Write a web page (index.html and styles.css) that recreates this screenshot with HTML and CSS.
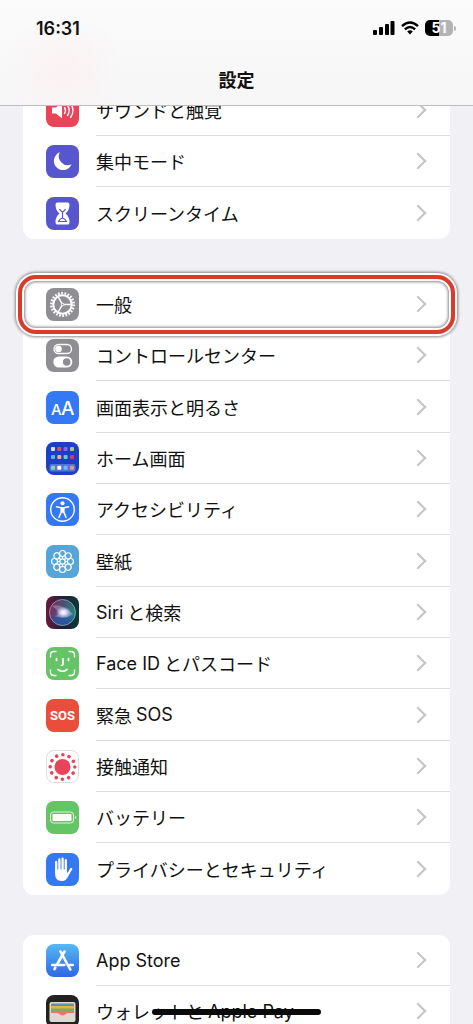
FILE: index.html
```html
<!DOCTYPE html>
<html lang="ja">
<head>
  <meta charset="UTF-8" />
  <meta name="viewport" content="width=device-width, initial-scale=1.0"/>
  <title>設定</title>
  <link rel="stylesheet" href="styles.css">
</head>
<body>
  <div class="screen">
    <header class="header">
      <div class="status-bar">
        <span class="time">16:31</span>
        <div class="status-icons">
          <svg width="22" height="14" viewBox="0 0 22 14">
            <rect x="0" y="9" width="4" height="5" rx="1"/>
            <rect x="6" y="6" width="4" height="8" rx="1"/>
            <rect x="12" y="3" width="4" height="11" rx="1"/>
            <rect x="17.500" y="0" width="4" height="14" rx="1"/>
          </svg>
          <svg width="18" height="14" viewBox="0 0 18 14">
            <g fill="none" stroke="#000" stroke-width="2.500">
              <path d="M1 5.200 Q9 -2.300 17 5.200"/>
              <path d="M3.900 8.300 Q9 3.600 14.100 8.300"/>
            </g>
            <path d="M6.200 10.500 Q9 8.200 11.800 10.500 L9 13.500 Z"/>
          </svg>
          <span class="battery">51</span>
        </div>
      </div>
      <h1>設定</h1>
    </header>

    <main class="settings">
      <nav class="group">
        <a class="row" href="#">
          <svg class="icon" viewBox="0 0 33 33">
            <rect width="33" height="33" rx="8" fill="#ea4459"/>
            <path d="M6 13.500 H10 L16 8.500 V24.500 L10 19.500 H6 Z" fill="#fff"/>
            <g fill="none" stroke="#fff" stroke-width="1.400" stroke-linecap="round">
              <path d="M18.500 13.500 Q20.500 16.500 18.500 19.500"/>
              <path d="M21.500 11.500 Q25 16.500 21.500 21.500"/>
              <path d="M24.500 9.500 Q29.500 16.500 24.500 23.500"/>
            </g>
          </svg>
          <span class="label">サウンドと触覚</span>
        </a>
        <a class="row" href="#">
          <svg class="icon" viewBox="0 0 33 33">
            <rect width="33" height="33" rx="8" fill="#5856ce"/>
            <path d="M13.800 7.300 A9.200 9.200 0 1 0 25.600 19.300 A8.900 8.900 0 0 1 13.800 7.300 Z" fill="#fff"/>
          </svg>
          <span class="label">集中モード</span>
        </a>
        <a class="row" href="#">
          <svg class="icon" viewBox="0 0 33 33">
            <rect width="33" height="33" rx="8" fill="#5856ce"/>
            <path d="M11 5.500 H22 Q23.500 5.500 23.500 8 Q23.500 13 19.500 16.500 Q23.500 20 23.500 25 Q23.500 27.500 22 27.500 H11 Q9.500 27.500 9.500 25 Q9.500 20 13.500 16.500 Q9.500 13 9.500 8 Q9.500 5.500 11 5.500 Z" fill="#fff"/>
            <path d="M13.500 12 Q14.500 14 16.500 15 Q18.500 14 19.500 12 M16.500 14.500 V21.500 M12.500 24.500 Q13.500 22 16.500 21 Q19.500 22 20.500 24.500 Z" fill="none" stroke="#5856ce" stroke-width="1.200"/>
          </svg>
          <span class="label">スクリーンタイム</span>
        </a>
      </nav>

      <nav class="group">
        <a class="row" href="#">
          <svg class="icon" viewBox="0 0 33 33">
            <rect width="33" height="33" rx="8" fill="#8e8e93"/>
            <g fill="none" stroke="#fff">
              <circle cx="16.500" cy="16.500" r="11.200" stroke-width="2.600" stroke-dasharray="1.700 1.498"/>
              <circle cx="16.500" cy="16.500" r="9.200" stroke-width="2"/>
              <path d="M16.500 16.500 H25.500 M16.500 16.500 L12 8.700 M16.500 16.500 L12 24.300" stroke-width="1.500"/>
              <circle cx="16.500" cy="16.500" r="1.300" fill="#8e8e93" stroke-width="1"/>
            </g>
          </svg>
          <span class="label">一般</span>
          <span class="highlight"></span>
        </a>
        <a class="row" href="#">
          <svg class="icon" viewBox="0 0 33 33">
            <rect width="33" height="33" rx="8" fill="#8e8e93"/>
            <rect x="8" y="5.500" width="17.500" height="9" rx="4.500" fill="none" stroke="#fff" stroke-width="1.300"/>
            <circle cx="12.500" cy="10" r="3.300" fill="#fff"/>
            <rect x="7.300" y="17.500" width="19" height="11" rx="5.500" fill="#fff"/>
            <circle cx="20.700" cy="23" r="3.800" fill="#8e8e93"/>
          </svg>
          <span class="label">コントロールセンター</span>
        </a>
        <a class="row" href="#">
          <svg class="icon" viewBox="0 0 33 33">
            <rect width="33" height="33" rx="8" fill="#3478f6"/>
            <text class="icon-text" x="5" y="24" font-size="15">A</text>
            <text class="icon-text" x="15" y="24" font-size="19">A</text>
          </svg>
          <span class="label">画面表示と明るさ</span>
        </a>
        <a class="row" href="#">
          <svg class="icon" viewBox="0 0 33 33">
            <rect width="33" height="33" rx="8" fill="#1d3fc4"/>
            <rect x="3.500" y="22" width="26" height="7.500" rx="2" fill="#5674d8"/>
            <g>
              <rect x="5" y="5" width="4" height="4" rx="1" fill="#d5e0fb"/>
              <rect x="11.300" y="5" width="4" height="4" rx="1" fill="#e4486b"/>
              <rect x="17.600" y="5" width="4" height="4" rx="1" fill="#9262ee"/>
              <rect x="24" y="5" width="4" height="4" rx="1" fill="#a5c978"/>
              <rect x="5" y="13" width="4" height="4" rx="1" fill="#58b4f3"/>
              <rect x="11.300" y="13" width="4" height="4" rx="1" fill="#eeb277"/>
              <rect x="17.600" y="13" width="4" height="4" rx="1" fill="#62d0c2"/>
              <rect x="24" y="13" width="4" height="4" rx="1" fill="#d83d57"/>
              <rect x="5" y="23.700" width="4" height="4" rx="1" fill="#84d49c"/>
              <rect x="11.300" y="23.700" width="4" height="4" rx="1" fill="#fff"/>
              <rect x="17.600" y="23.700" width="4" height="4" rx="1" fill="#69bdf6"/>
              <rect x="24" y="23.700" width="4" height="4" rx="1" fill="#e59b76"/>
            </g>
          </svg>
          <span class="label">ホーム画面</span>
        </a>
        <a class="row" href="#">
          <svg class="icon" viewBox="0 0 33 33">
            <rect width="33" height="33" rx="8" fill="#3478f6"/>
            <circle cx="16.500" cy="16.500" r="11.800" fill="none" stroke="#fff" stroke-width="1.400"/>
            <circle cx="16.500" cy="10.300" r="2" fill="#fff"/>
            <path d="M10.500 13.800 L15 14.800 H18 L22.500 13.800 M15.300 15 V19 L13 24.300 M17.700 15 V19 L20 24.300" fill="none" stroke="#fff" stroke-width="1.600" stroke-linecap="round" stroke-linejoin="round"/>
            <rect x="14.800" y="14.300" width="3.400" height="5.500" fill="#fff"/>
          </svg>
          <span class="label">アクセシビリティ</span>
        </a>
        <a class="row" href="#">
          <svg class="icon" viewBox="0 0 33 33">
            <rect width="33" height="33" rx="8" fill="#55a5d9"/>
            <g fill="none" stroke="#fff" stroke-width="1.200">
              <circle cx="16.500" cy="16.500" r="2.600"/>
              <g id="petals">
                <circle cx="16.500" cy="8.500" r="3"/>
                <circle cx="16.500" cy="24.500" r="3"/>
                <circle cx="8.500" cy="16.500" r="3"/>
                <circle cx="24.500" cy="16.500" r="3"/>
                <path d="M16.500 11.500 V14 M16.500 19 V21.500 M11.500 16.500 H14 M19 16.500 H21.500"/>
              </g>
              <use href="#petals" transform="rotate(45 16.500 16.500)"/>
            </g>
          </svg>
          <span class="label">壁紙</span>
        </a>
        <a class="row" href="#">
          <svg class="icon" viewBox="0 0 33 33">
            <defs>
              <linearGradient id="siri-bg" x1="0" y1="0" x2="1" y2="0">
                <stop offset="0" stop-color="#6a1a3e"/>
                <stop offset="0.500" stop-color="#1f1f3c"/>
                <stop offset="1" stop-color="#0c3a34"/>
              </linearGradient>
              <linearGradient id="siri-orb" x1="0" y1="0.200" x2="1" y2="0.600">
                <stop offset="0" stop-color="#8a2552"/>
                <stop offset="0.450" stop-color="#4a5078"/>
                <stop offset="1" stop-color="#1f8a7c"/>
              </linearGradient>
              <linearGradient id="siri-low" x1="0" y1="0" x2="0" y2="1">
                <stop offset="0.500" stop-color="#2b50b8" stop-opacity="0"/>
                <stop offset="1" stop-color="#2450a8"/>
              </linearGradient>
              <radialGradient id="siri-glow">
                <stop offset="0" stop-color="#fff"/>
                <stop offset="0.350" stop-color="#f4e4ff" stop-opacity="0.900"/>
                <stop offset="1" stop-color="#b8c6ff" stop-opacity="0"/>
              </radialGradient>
            </defs>
            <rect width="33" height="33" rx="8" fill="url(#siri-bg)"/>
            <circle cx="16.500" cy="16.500" r="13" fill="url(#siri-orb)"/>
            <circle cx="16.500" cy="16.500" r="13" fill="url(#siri-low)" stroke="#a3b8b8" stroke-opacity="0.700"/>
            <path d="M6 10 Q15 7 27 18 Q20 24 8 20 Q18 18 6 10 Z" fill="#d8c8ec" opacity="0.350"/>
            <ellipse cx="17.500" cy="16.500" rx="8" ry="6" fill="url(#siri-glow)"/>
          </svg>
          <span class="label">Siri<span>と検索</span></span>
        </a>
        <a class="row" href="#">
          <svg class="icon" viewBox="0 0 33 33">
            <rect width="33" height="33" rx="8" fill="#65c466"/>
            <g fill="none" stroke="#fff" stroke-linecap="round">
              <path d="M4.500 10 V8 Q4.500 4.500 8 4.500 H10 M23 4.500 H25 Q28.500 4.500 28.500 8 V10 M28.500 23 V25 Q28.500 28.500 25 28.500 H23 M10 28.500 H8 Q4.500 28.500 4.500 25 V23" stroke-width="1.400"/>
              <path d="M10.500 11.500 V13.500 M22.500 11.500 V13.500 M17 11.500 V17 Q17 18.500 15.300 18.500 M12 22.500 Q16.500 26 21 22.500" stroke-width="1.700"/>
            </g>
          </svg>
          <span class="label">Face ID<span>とパスコード</span></span>
        </a>
        <a class="row" href="#">
          <svg class="icon" viewBox="0 0 33 33">
            <rect width="33" height="33" rx="8" fill="#eb4d3d"/>
            <text class="icon-sos" x="16.500" y="21" text-anchor="middle">SOS</text>
          </svg>
          <span class="label">緊急<span>SOS</span></span>
        </a>
        <a class="row" href="#">
          <svg class="icon" viewBox="0 0 33 33">
            <rect x="0.500" y="0.500" width="32" height="32" rx="7.500" fill="#fff" stroke="#dedee2"/>
            <circle cx="16.500" cy="17" r="8" fill="#ea445a"/>
            <circle cx="16.500" cy="17" r="12.300" fill="none" stroke="#ea445a" stroke-width="3.600" stroke-linecap="round" stroke-dasharray="0.010 6.430"/>
          </svg>
          <span class="label">接触通知</span>
        </a>
        <a class="row" href="#">
          <svg class="icon" viewBox="0 0 33 33">
            <rect width="33" height="33" rx="8" fill="#65c466"/>
            <rect x="4.500" y="11" width="23" height="11" rx="3" fill="none" stroke="#fff" stroke-opacity="0.800"/>
            <rect x="6.500" y="13" width="19" height="7" rx="1" fill="#fff"/>
            <path d="M29 14.800 Q31 16.500 29 18.200 Z" fill="#fff"/>
          </svg>
          <span class="label">バッテリー</span>
        </a>
        <a class="row" href="#">
          <svg class="icon" viewBox="0 0 33 33">
            <rect width="33" height="33" rx="8" fill="#3478f6"/>
            <g fill="none" stroke="#fff" stroke-width="2.300" stroke-linecap="round">
              <path d="M10.200 9 V19 M13.400 6.500 V18 M16.600 5.700 V18 M19.800 7.200 V18"/>
              <path d="M21.500 22 L25.200 16"/>
            </g>
            <path d="M9 16.500 H21 V20 L24 18 Q22.500 24 20 26.500 Q18.500 28 15.500 28 Q9 28 9 20 Z" fill="#fff"/>
          </svg>
          <span class="label">プライバシーとセキュリティ</span>
        </a>
      </nav>

      <nav class="group">
        <a class="row" href="#">
          <svg class="icon" viewBox="0 0 33 33">
            <defs>
              <linearGradient id="store-bg" x1="0" y1="0" x2="0" y2="1">
                <stop offset="0" stop-color="#57b9f4"/>
                <stop offset="1" stop-color="#2e66e3"/>
              </linearGradient>
            </defs>
            <rect width="33" height="33" rx="8" fill="url(#store-bg)"/>
            <g fill="none" stroke="#fff" stroke-width="2.600" stroke-linecap="round">
              <path d="M18.500 7.500 L11 20.500 M14.500 7.500 L24.300 25.500 M9.300 23.700 L8.500 25.200"/>
              <path d="M6.300 21 H18.300 M23.500 21 H26.700"/>
            </g>
          </svg>
          <span class="label">App Store</span>
        </a>
        <a class="row" href="#">
          <svg class="icon" viewBox="0 0 33 33">
            <rect width="33" height="33" rx="8" fill="#222"/>
            <rect x="3.500" y="7" width="26" height="20" rx="2" fill="#ded9d0"/>
            <rect x="5" y="8.500" width="23" height="5" rx="1" fill="#5194b7"/>
            <rect x="5" y="11" width="23" height="4" fill="#e3b53e"/>
            <rect x="5" y="13.500" width="23" height="4" fill="#78ad64"/>
            <rect x="5" y="16" width="23" height="3" fill="#ec7565"/>
            <path d="M4 18 H12 Q16.500 23.500 21 18 H29 V26 H4 Z" fill="#ded9d0"/>
            <path d="M12 17.500 H21 Q16.500 23.500 12 17.500 Z" fill="#ec7565"/>
          </svg>
          <span class="label">ウォレットと<span>Apple Pay</span><span class="marker"></span></span>
        </a>
      </nav>
    </main>
  </div>
</body>
</html>
```

FILE: styles.css
```css
* {
  box-sizing: border-box;
}

body {
  margin: 0;
  font-family: Inter, "Noto Sans CJK JP", sans-serif;
  background-color: #f0f0f5;
  color: #111;
}

.screen {
  position: relative;
  height: 100vh;
  overflow: hidden;
}

/* header lies over the scrolled list */
.header {
  position: absolute;
  top: 0;
  left: 0;
  right: 0;
  z-index: 2;
  padding: 16px 20px 12px;
  border-bottom: 1px solid #bdbdc0;
  background: radial-gradient(circle at 64px 72px, #fbf2f2, rgba(251, 242, 242, 0) 60px),
              linear-gradient(#fbfbfc, #f6f6f7);
}

.status-bar {
  display: flex;
  justify-content: space-between;
  align-items: center;
  height: 24px;
  padding-left: 16px;
}

.time {
  font-size: 18px;
  font-weight: 600;
}

.status-icons {
  display: flex;
  align-items: center;
  gap: 6px;
}

.battery {
  position: relative;
  width: 28px;
  height: 16px;
  border-radius: 5px;
  background: linear-gradient(90deg, #000 50%, #b3b3b5 50%);
  color: #fff;
  font-size: 14px;
  font-weight: 700;
  line-height: 16px;
  text-align: center;
}

.battery::after {
  content: "";
  position: absolute;
  top: 6px;
  right: -3px;
  width: 2px;
  height: 5px;
  border-radius: 0 2px 2px 0;
  background: #b3b3b5;
}

h1 {
  margin: 29px 0 0;
  font-size: 18px;
  font-weight: 700;
  line-height: 24px;
  text-align: center;
}

.settings {
  display: flex;
  flex-direction: column;
  gap: 40px;
  padding: 85px 23px 0;
}

.group {
  border-radius: 11px;
  background: #fff;
}

.row {
  position: relative;
  display: flex;
  align-items: center;
  gap: 17px;
  height: 51px;
  padding-left: 23px;
  color: inherit;
  text-decoration: none;
}

.row:nth-child(3n) {
  height: 52px;
}

.icon {
  flex: none;
  width: 33px;
  height: 33px;
}

.label {
  position: relative;
  display: flex;
  flex: 1;
  align-items: center;
  align-self: stretch;
  gap: 4px;
  padding-right: 26px;
  border-bottom: 1px solid #dedee1;
  font-size: 18px;
  white-space: nowrap;
}

.row:last-child .label {
  border-bottom-color: transparent;
}

/* chevron */
.label::after {
  content: "";
  width: 10px;
  height: 10px;
  margin-left: auto;
  border: solid #c4c4c7;
  border-width: 2px 2px 0 0;
  transform: rotate(45deg);
}

.icon-text {
  fill: #fff;
  font-family: Inter, sans-serif;
  font-weight: 500;
}

.icon-sos {
  fill: #fff;
  font-family: "Liberation Sans Narrow", Roboto, sans-serif;
  font-size: 13px;
  font-weight: 700;
}

.highlight {
  position: absolute;
  inset: -4px -5px;
  z-index: 1;
  border: 4px solid #dc3a2b;
  border-radius: 18px;
  box-shadow: 0 0 0 2px #fff, 0 0 3px 3px #888,
              inset 0 0 0 2px #fff, inset 0 0 3px 3px #888;
}

.marker {
  position: absolute;
  left: 56px;
  top: 23px;
  width: 169px;
  height: 6px;
  border-radius: 3px;
  background: #0a0a0a;
}
```
